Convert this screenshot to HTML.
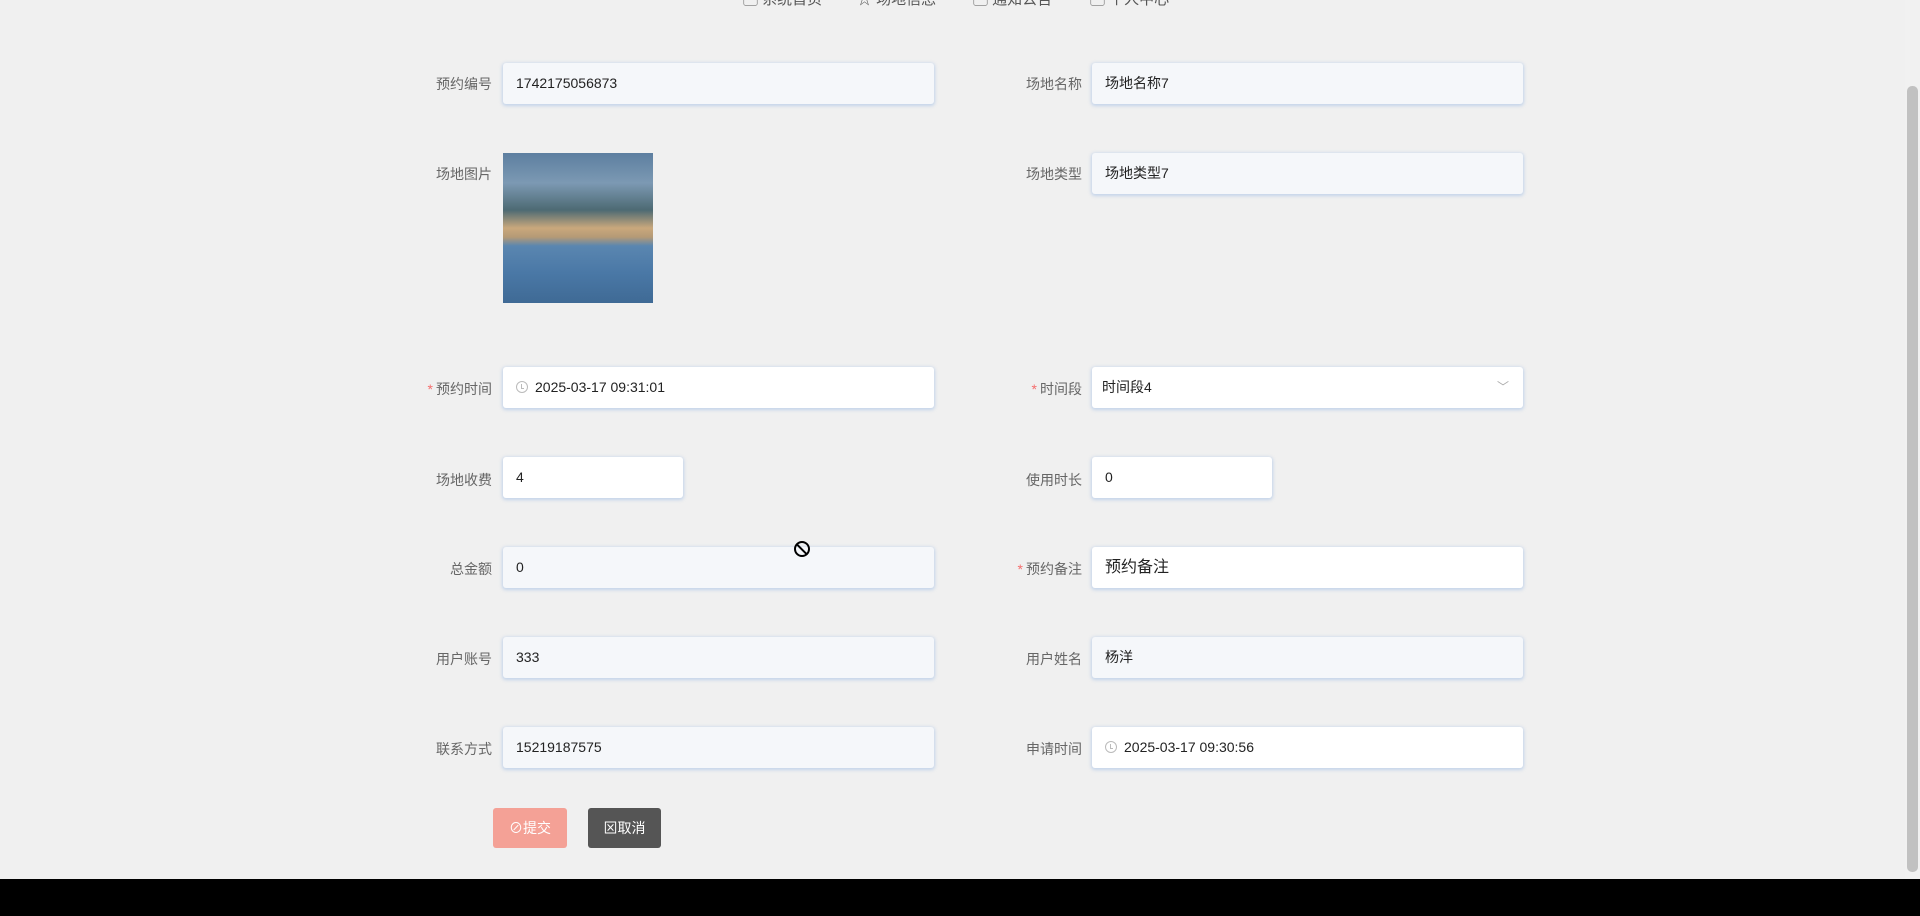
<!DOCTYPE html>
<html><head><meta charset="utf-8"><style>
*{box-sizing:border-box;margin:0;padding:0}
body{width:1920px;height:916px;background:#f0f0f0;font-family:"Liberation Sans","Noto Sans CJK SC",sans-serif;font-size:14px;color:#333;position:relative;overflow:hidden}
.nav{position:absolute;top:-12px;font-size:15px;color:#555}
.lab{position:absolute;font-size:14px;color:#666;white-space:nowrap}
.in{position:absolute;height:41px;background:#f5f7fa;border-radius:3px;box-shadow:0 1px 3px 1px rgba(160,190,230,.55);padding-left:13px;line-height:41px;font-size:14px;color:#222;width:431px}
.w{background:#fff}
.star{color:#f56c6c;margin-right:3px}
.clk{display:inline-block;width:12px;height:12px;border:1px solid #bbb;border-radius:50%;vertical-align:-1px;margin-right:7px;position:relative}
.clk:after{content:"";position:absolute;left:4px;top:2px;width:2px;height:4px;border-left:1px solid #bbb;border-bottom:1px solid #bbb}
</style></head><body>
<div class="nav" style="left:743px">▢ 系统首页</div>
<div class="nav" style="left:857px">☆ 场地信息</div>
<div class="nav" style="left:973px">▢ 通知公告</div>
<div class="nav" style="left:1090px">▢ 个人中心</div>

<div style="position:absolute;left:0;top:0;width:1920px">
<div class="lab" style="left:0;width:492px;text-align:right;top:74px">预约编号</div>
<div class="lab" style="left:0;width:492px;text-align:right;top:164px">场地图片</div>
<div class="lab" style="left:0;width:492px;text-align:right;top:379px"><span class="star">*</span>预约时间</div>
<div class="lab" style="left:0;width:492px;text-align:right;top:470px">场地收费</div>
<div class="lab" style="left:0;width:492px;text-align:right;top:559px">总金额</div>
<div class="lab" style="left:0;width:492px;text-align:right;top:649px">用户账号</div>
<div class="lab" style="left:0;width:492px;text-align:right;top:739px">联系方式</div>
<div class="lab" style="left:0;width:1082px;text-align:right;top:74px">场地名称</div>
<div class="lab" style="left:0;width:1082px;text-align:right;top:164px">场地类型</div>
<div class="lab" style="left:0;width:1082px;text-align:right;top:379px"><span class="star">*</span>时间段</div>
<div class="lab" style="left:0;width:1082px;text-align:right;top:470px">使用时长</div>
<div class="lab" style="left:0;width:1082px;text-align:right;top:559px"><span class="star">*</span>预约备注</div>
<div class="lab" style="left:0;width:1082px;text-align:right;top:649px">用户姓名</div>
<div class="lab" style="left:0;width:1082px;text-align:right;top:739px">申请时间</div>
</div>

<div class="in" style="left:503px;top:63px">1742175056873</div>
<div class="in" style="left:1092px;top:63px">场地名称7</div>
<div style="position:absolute;left:503px;top:153px;width:150px;height:150px;background:linear-gradient(180deg,#5d7fa0 0%,#7c99b3 20%,#4d6a73 38%,#c9a87c 50%,#b59a76 56%,#5a86b0 62%,#4a78a6 80%,#3f6a95 100%)"></div>
<div class="in" style="left:1092px;top:153px">场地类型7</div>
<div class="in w" style="left:503px;top:367px"><span class="clk"></span>2025-03-17 09:31:01</div>
<div class="in w" style="left:1092px;top:367px;padding-left:10px">时间段4<span style="position:absolute;right:14px;color:#aaa;font-size:12px">﹀</span></div>
<div class="in w" style="left:503px;top:457px;width:180px">4</div>
<div class="in w" style="left:1092px;top:457px;width:180px">0</div>
<div class="in" style="left:503px;top:547px">0</div>
<div class="in w" style="left:1092px;top:547px;font-size:16px">预约备注</div>
<div class="in" style="left:503px;top:637px">333</div>
<div class="in" style="left:1092px;top:637px">杨洋</div>
<div class="in" style="left:503px;top:727px">15219187575</div>
<div class="in w" style="left:1092px;top:727px"><span class="clk"></span>2025-03-17 09:30:56</div>

<div style="position:absolute;left:794px;top:541px;width:16px;height:16px;border:2px solid #000;border-radius:50%"><div style="position:absolute;left:5px;top:-1px;width:2px;height:15px;background:#000;transform:rotate(-45deg)"></div></div>

<div style="position:absolute;left:493px;top:808px;width:74px;height:40px;background:#f4a196;border-radius:3px;color:#fff;text-align:center;line-height:40px;font-size:14px">⊘提交</div>
<div style="position:absolute;left:588px;top:808px;width:73px;height:40px;background:#555;border-radius:3px;color:#fff;text-align:center;line-height:40px;font-size:14px">⊠取消</div>

<div style="position:absolute;left:1905px;top:0;width:15px;height:879px;background:#f1f1f1"></div>
<div style="position:absolute;left:1907px;top:86px;width:11px;height:786px;background:#c1c1c1;border-radius:5px"></div>
<div style="position:absolute;left:0;top:879px;width:1920px;height:37px;background:#000"></div>
</body></html>
